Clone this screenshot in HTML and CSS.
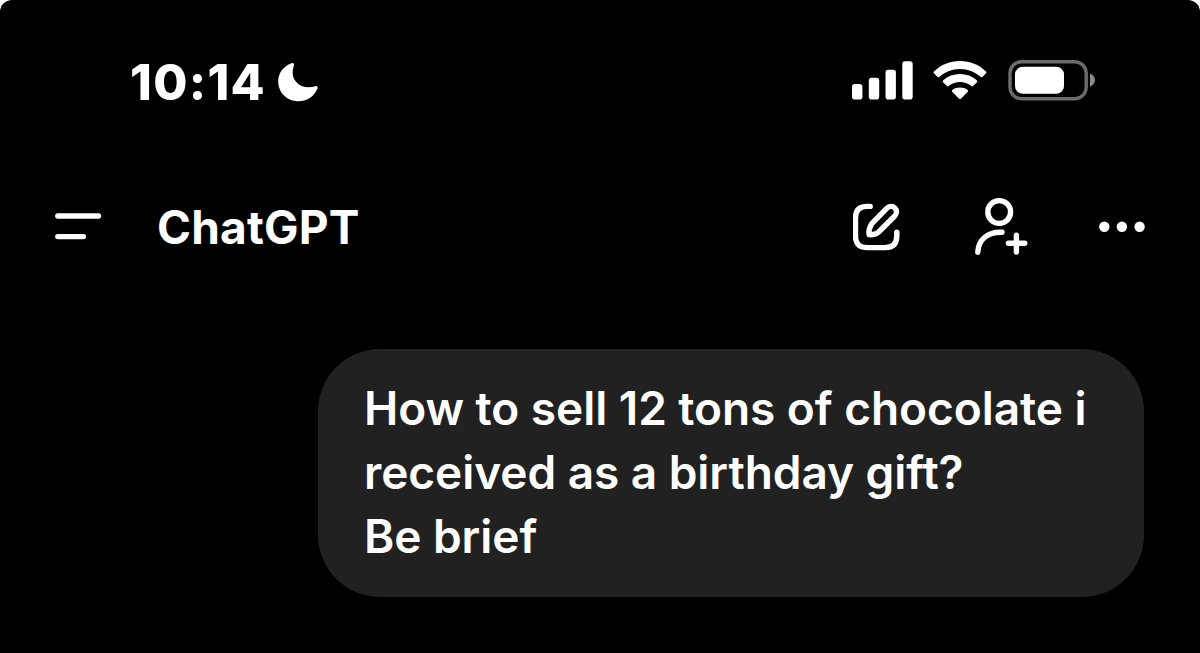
FILE: index.html
```
<!DOCTYPE html>
<html lang="en">
<head>
    <meta charset="UTF-8">
    <meta name="viewport" content="width=device-width, initial-scale=1.0">
    <title>ChatGPT</title>
    <link rel="stylesheet" href="styles.css">
</head>
<body>
    <div class="screen">
        <div class="status-bar">
            <span class="time">10:14</span>
            <svg class="moon" width="42" height="42" viewBox="0 0 42 42">
                <path d="M14.5 2.2 C16.3 1.3 17.5 2.5 17 4.2 C14.8 11 15.3 16.5 19 20.7 C23.5 26 31 27.4 38.2 25.2 C40 24.7 41.2 25.9 40.5 27.6 C37.3 35.5 30.3 40.3 21.8 40.3 C10 40.3 1.2 31.8 1.2 20.3 C1.2 12 6.3 5.3 14.5 2.2 Z"/>
            </svg>
            <div class="status-icons">
                <svg class="signal" width="62" height="40" viewBox="0 0 62 40">
                    <rect x="0" y="24" width="10.4" height="15.6" rx="2.8"/>
                    <rect x="16.8" y="17.8" width="10.4" height="21.8" rx="2.8"/>
                    <rect x="33.5" y="9.7" width="10.4" height="29.9" rx="2.8"/>
                    <rect x="50.3" y="1.2" width="10.4" height="38.4" rx="2.8"/>
                </svg>
                <svg class="wifi" width="54" height="40" viewBox="0 0 54 40">
                    <path d="M27 1 C37 1 46 4.7 52.8 11.2 C53.6 12 53.6 12.8 52.8 13.6 L49.7 16.8 C49 17.5 48.2 17.5 47.4 16.8 C41.9 11.7 34.8 8.9 27 8.9 C19.2 8.9 12.1 11.7 6.6 16.8 C5.8 17.5 5 17.5 4.3 16.8 L1.2 13.6 C.4 12.8 .4 12 1.2 11.2 C8 4.7 17 1 27 1 Z"/>
                    <path d="M27 14 C33.4 14 39.2 16.2 43.7 20.3 C44.5 21 44.5 21.8 43.7 22.6 L40.4 25.8 C39.7 26.5 38.9 26.5 38.1 25.8 C35 23.3 31.3 21.9 27 21.9 C22.7 21.9 19 23.3 15.9 25.8 C15.1 26.5 14.3 26.5 13.6 25.8 L10.3 22.6 C9.5 21.8 9.5 21 10.3 20.3 C14.8 16.2 20.6 14 27 14 Z"/>
                    <path d="M27 27.4 C29.8 27.4 32.3 28.2 34.4 29.8 C35.3 30.5 35.3 31.3 34.5 32.1 L28.2 38.5 C27.4 39.3 26.6 39.3 25.8 38.5 L19.5 32.1 C18.7 31.3 18.7 30.5 19.6 29.8 C21.7 28.2 24.2 27.4 27 27.4 Z"/>
                </svg>
                <svg class="battery" width="88" height="42" viewBox="0 0 88 42">
                    <rect class="battery-case" x="2" y="2.7" width="76.2" height="37" rx="11.5"/>
                    <rect x="7" y="7.7" width="49" height="27" rx="7.8"/>
                    <path class="battery-tip" d="M82 14.5 C85.4 15.8 87 18.3 87 21.1 C87 23.9 85.4 26.4 82 27.7 Z"/>
                </svg>
            </div>
        </div>

        <header class="nav">
            <svg class="menu" width="48" height="30" viewBox="0 0 48 30">
                <path d="M2.8 4 H43.5 M2.8 24.6 H28.4"/>
            </svg>
            <h1>ChatGPT</h1>
            <div class="actions">
                <svg class="compose" width="48" height="48" viewBox="0 0 48 48">
                    <path d="M17.2 3.4 H14 C6.3 3.4 2.5 7.3 2.5 15 V32.5 C2.5 40.7 6.3 44.6 14.5 44.6 H32 C39.9 44.6 43.8 40.7 43.8 33 V29.3"/>
                    <path d="M33.7 5.4 C36.3 2.8 39.7 2.8 41.8 5 C44.2 7.3 44.1 10.7 41.5 13.2 L25.7 29 C22.7 31.6 19.5 31.9 16.1 31.6 C15.6 27.8 16.1 24.8 18.6 20.9 Z"/>
                </svg>
                <svg class="add-user" width="54" height="60" viewBox="0 0 54 60">
                    <circle cx="25.2" cy="15" r="11.4"/>
                    <path d="M3.8 55.2 C4.5 42.5 13.5 34.7 28 35.2"/>
                    <path d="M34.4 46.3 H50.8 M42.4 38.2 V55"/>
                </svg>
                <svg class="more" width="48" height="12" viewBox="0 0 48 12">
                    <circle cx="5.3" cy="5.7" r="5.2"/>
                    <circle cx="22.9" cy="5.7" r="5.2"/>
                    <circle cx="40.6" cy="5.7" r="5.2"/>
                </svg>
            </div>
        </header>

        <main class="chat">
            <div class="message">
                How to sell 12 tons of chocolate i<br>
                received as a birthday gift?<br>
                Be brief
            </div>
        </main>
    </div>
</body>
</html>
```
FILE: styles.css
```
* {
    box-sizing: border-box;
}

body {
    margin: 0;
    background: white;
    color: white;
    font-family: Inter, "Liberation Sans", sans-serif;
}

.screen {
    height: 653px;
    background: black;
    border-radius: 12px 12px 0 0;
    overflow: hidden;
}

svg {
    display: block;
    flex-shrink: 0;
    fill: white;
}

.status-bar {
    display: flex;
    align-items: center;
    height: 164px;
    padding: 0 104px 0 130px;
}

.time {
    width: 147px;
    font-size: 49.5px;
    font-weight: 800;
    line-height: 60px;
    letter-spacing: 1.3px;
    white-space: nowrap;
}

.status-icons {
    display: flex;
    align-items: center;
    margin-left: auto;
    margin-top: -4px;
}

.wifi {
    margin-left: 19px;
}

.battery {
    margin-left: 21px;
}

.battery-case {
    fill: none;
    stroke: #6b6b6b;
    stroke-width: 3.4;
}

.battery-tip {
    fill: #8a8a8a;
}

.nav {
    display: flex;
    align-items: center;
    height: 126px;
    padding: 0 53px 0 55px;
}

h1 {
    margin: 0 0 0 54px;
    font-size: 46px;
    font-weight: 700;
    line-height: 56px;
    letter-spacing: 0.2px;
}

.actions {
    display: flex;
    align-items: center;
    margin-left: auto;
}

.menu,
.compose,
.add-user {
    fill: none;
    stroke: white;
    stroke-width: 5.4;
    stroke-linecap: round;
    stroke-linejoin: round;
}

.add-user {
    margin-left: 73px;
}

.more {
    margin-left: 71px;
}

.chat {
    display: flex;
    justify-content: flex-end;
    padding: 59px 56px 0;
}

.message {
    width: 826px;
    height: 248px;
    padding: 28px 0 0 46px;
    background: #212121;
    border-radius: 62px;
    font-size: 46px;
    font-weight: 600;
    line-height: 63.8px;
    letter-spacing: -0.05px;
    white-space: nowrap;
}
```
